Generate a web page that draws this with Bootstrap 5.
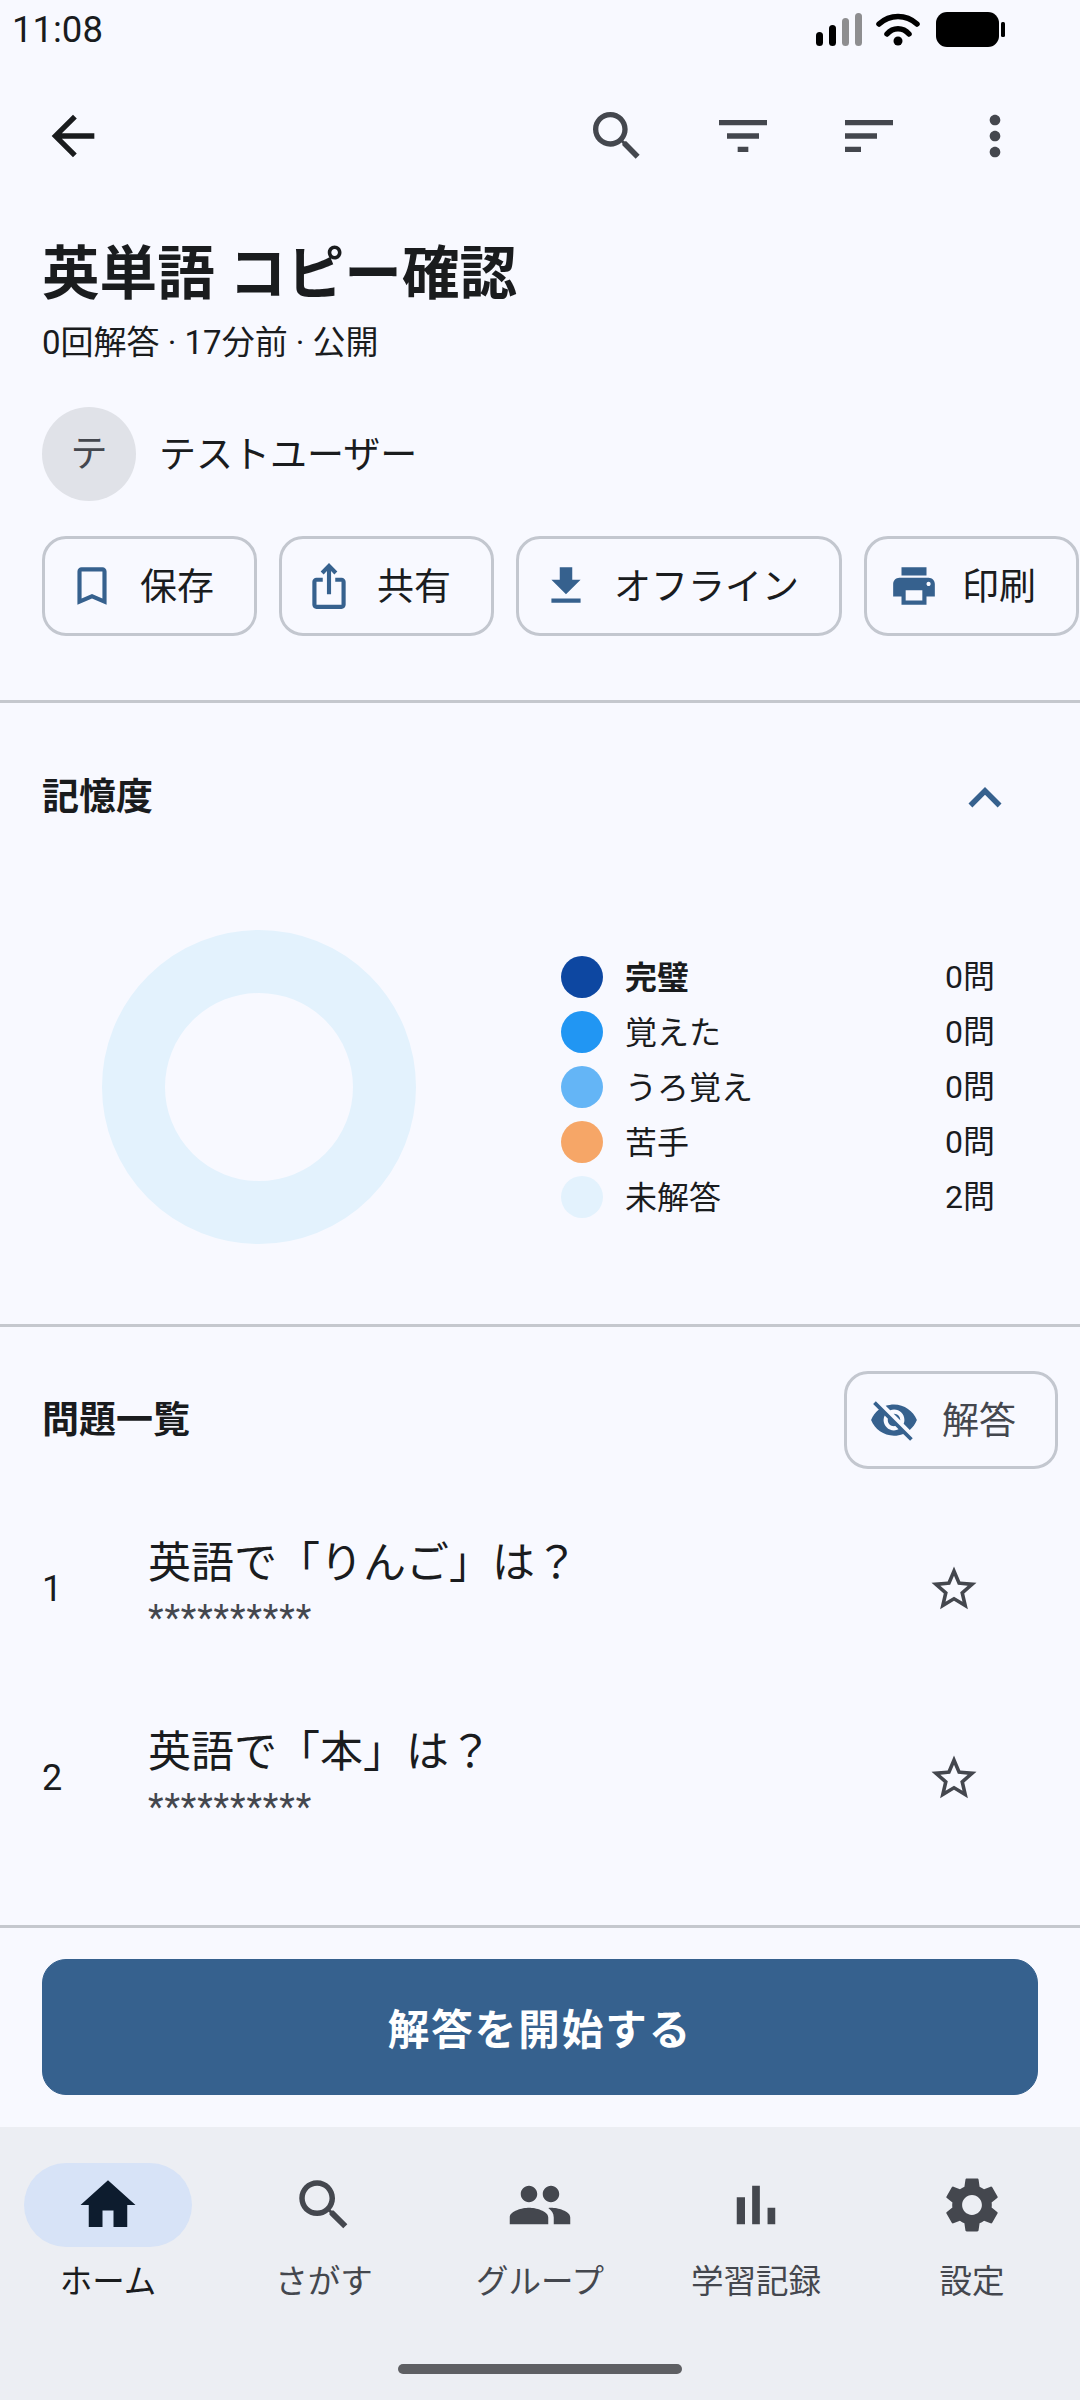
<!DOCTYPE html>
<html lang="ja">
<head>
<meta charset="UTF-8">
<title>英単語 コピー確認</title>
<link href="https://cdn.jsdelivr.net/npm/bootstrap@5.3.0/dist/css/bootstrap.min.css" rel="stylesheet">
<style>
html, body { width: 1080px; height: 2400px; overflow: hidden; }
body { background: #f8f9ff; color: #1a1c1e; font-family: Roboto, "Noto Sans CJK JP", sans-serif; }
svg { fill: currentColor; flex: none; display: block; }
.status-bar { height: 60px; padding: 0 72px 0 12px; }
.status-time { font-size: 36.5px; line-height: 60px; }
.app-bar { height: 152px; padding: 0 22px 0 41px; color: #44474e; }
.ico-btn { width: 126px; height: 64px; }
.back-btn { color: #1a1c1e; }
.head-block { padding: 25px 0 0 42px; }
.page-title { font-size: 57.6px; font-weight: 700; line-height: 76px; margin: 0; }
.page-sub { font-size: 33px; line-height: 44px; margin-top: 8px; }
.owner-row { margin-top: 40px; gap: 23px; font-size: 37px; line-height: 94px; }
.owner-name { padding-top: 4px; }
.owner-pic { width: 94px; height: 94px; border-radius: 50%; background: #e0e2e8; color: #44474e; font-size: 37px; padding-top: 3px; }
.chip-row { margin-top: 33px; gap: 22px; }
.chip-btn { height: 100px; border: 3px solid #c3c7cf; border-radius: 24px; padding: 0 40px 0 22px; gap: 23px; font-size: 37px; color: #1a1c1e; background: transparent; white-space: nowrap; }
.chip-btn svg { color: #36618e; }
.chip-label { padding-top: 4px; }
.rule { height: 3px; background: #c5c8ce; flex: none; }
.mem-section { height: 625px; margin-top: 64px; }
.mem-head { height: 190px; padding: 0 62px 0 42px; }
.sec-title { font-size: 37px; font-weight: 700; line-height: 50px; }
.mem-chart { padding-left: 102px; gap: 145px; margin-top: 37px; }
.donut { width: 314px; height: 314px; border-radius: 50%; border: 63px solid #e3f2fd; flex: none; }
.legend { width: 434px; }
.legend-row { height: 55px; font-size: 32px; }
.legend-dot { width: 42px; height: 42px; border-radius: 50%; margin-right: 22px; flex: none; }
.legend-name { padding-top: 2px; }
.legend-val { margin-left: auto; }
.list-section { height: 602px; }
.list-head { height: 143px; padding: 42px 22px 0 42px; margin-bottom: 24px; }
.list-head .sec-title { padding-top: 3px; }
.eye-btn { width: 214px; height: 98px; color: #44474e; }
.q-row { height: 189.5px; padding: 0 0 0 42px; }
.q-num { width: 106px; font-size: 36px; }
.q-body { padding-bottom: 8px; }
.q-text { font-size: 43px; line-height: 66px; }
.q-ans { font-size: 36px; line-height: 44px; letter-spacing: .9px; color: #44474e; }
.q-star { margin-right: 99px; color: #44474e; }
.start-wrap { padding: 31px 42px 32px; }
.start-btn { height: 136px; background: #36618e; border-color: #36618e; color: #fff; font-size: 41.5px; font-weight: 700; letter-spacing: 2px; border-radius: 24px; padding-top: 14px; }
.bottom-nav { background: #eceef3; height: 273px; padding-top: 36px; }
.nav-slot { width: 216px; color: #44474e; font-size: 32.5px; line-height: 44px; }
.nav-pill { width: 168px; height: 84px; border-radius: 42px; margin-bottom: 13px; }
.nav-slot.on { color: #1a1c1e; }
.nav-slot.on .nav-pill { background: #d7e3f7; color: #0d1c2e; }
.home-bar { width: 284px; height: 10px; border-radius: 5px; background: #5e5f63; position: absolute; left: 398px; bottom: 26px; }
</style>
</head>
<body class="d-flex flex-column position-relative">

<div class="status-bar d-flex align-items-center justify-content-between">
  <span class="status-time">11:08</span>
  <svg width="192" height="36" viewBox="0 0 192 36" fill="none">
    <rect x="0" y="20" width="7" height="14" rx="3.5" fill="#000"/>
    <rect x="13" y="13" width="7" height="21" rx="3.5" fill="#000"/>
    <rect x="26" y="6" width="7" height="28" rx="3.5" fill="#8e8e90"/>
    <rect x="39" y="1" width="7" height="33" rx="3.5" fill="#8e8e90"/>
    <path d="M63 12 C74 2 90 2 101 12" stroke="#000" stroke-width="5.5" stroke-linecap="round" fill="none"/>
    <path d="M71 22 C77 15 87 15 93 22" stroke="#000" stroke-width="5.5" stroke-linecap="round" fill="none"/>
    <circle cx="82" cy="29" r="4.5" fill="#000"/>
    <rect x="120" y="0" width="63" height="35" rx="11" fill="#000"/>
    <rect x="185" y="10" width="4" height="15" rx="1.5" fill="#000"/>
  </svg>
</div>

<div class="app-bar d-flex align-items-center">
  <svg class="back-btn" width="64" height="64" viewBox="0 0 24 24"><path d="M20 11H7.83l5.59-5.59L12 4l-8 8 8 8 1.41-1.41L7.83 13H20v-2z"/></svg>
  <div class="ms-auto d-flex">
    <div class="ico-btn d-flex justify-content-center"><svg width="64" height="64" viewBox="0 0 24 24"><path d="M15.5 14h-.79l-.28-.27C15.41 12.59 16 11.11 16 9.5 16 5.91 13.09 3 9.5 3S3 5.91 3 9.5 5.91 16 9.5 16c1.61 0 3.09-.59 4.23-1.57l.27.28v.79l5 4.99L20.49 19l-4.99-5zm-6 0C7.01 14 5 11.99 5 9.5S7.01 5 9.5 5 14 7.01 14 9.5 11.99 14 9.5 14z"/></svg></div>
    <div class="ico-btn d-flex justify-content-center"><svg width="64" height="64" viewBox="0 0 24 24"><path d="M10 18h4v-2h-4v2zM3 6v2h18V6H3zm3 7h12v-2H6v2z"/></svg></div>
    <div class="ico-btn d-flex justify-content-center"><svg width="64" height="64" viewBox="0 0 24 24"><path d="M3 18h6v-2H3v2zM3 6v2h18V6H3zm0 7h12v-2H3v2z"/></svg></div>
    <div class="ico-btn d-flex justify-content-center"><svg width="64" height="64" viewBox="0 0 24 24"><path d="M12 8c1.1 0 2-.9 2-2s-.9-2-2-2-2 .9-2 2 .9 2 2 2zm0 2c-1.1 0-2 .9-2 2s.9 2 2 2 2-.9 2-2-.9-2-2-2zm0 6c-1.1 0-2 .9-2 2s.9 2 2 2 2-.9 2-2-.9-2-2-2z"/></svg></div>
  </div>
</div>

<div class="head-block">
  <h1 class="page-title">英単語 コピー確認</h1>
  <div class="page-sub">0回解答 · 17分前 · 公開</div>
  <div class="owner-row d-flex align-items-center">
    <div class="owner-pic d-flex align-items-center justify-content-center">テ</div>
    <span class="owner-name">テストユーザー</span>
  </div>
  <div class="chip-row d-flex">
    <button class="btn chip-btn d-flex align-items-center"><svg width="50" height="50" viewBox="0 0 24 24"><path d="M17 3H7c-1.1 0-1.99.9-1.99 2L5 21l7-3 7 3V5c0-1.1-.9-2-2-2zm0 15l-5-2.18L7 18V5h10v13z"/></svg><span class="chip-label">保存</span></button>
    <button class="btn chip-btn d-flex align-items-center"><svg width="50" height="50" viewBox="0 0 24 24"><path d="M16 5l-1.42 1.42-1.59-1.59V16h-1.98V4.83L9.42 6.42 8 5l4-4 4 4zm4 5v11c0 1.1-.9 2-2 2H6c-1.11 0-2-.9-2-2V10c0-1.11.89-2 2-2h3v2H6v11h12V10h-3V8h3c1.1 0 2 .89 2 2z"/></svg><span class="chip-label">共有</span></button>
    <button class="btn chip-btn d-flex align-items-center"><svg width="50" height="50" viewBox="0 0 24 24"><path d="M19 9h-4V3H9v6H5l7 7 7-7zM5 18v2h14v-2H5z"/></svg><span class="chip-label">オフライン</span></button>
    <button class="btn chip-btn d-flex align-items-center"><svg width="50" height="50" viewBox="0 0 24 24"><path d="M19 8H5c-1.66 0-3 1.34-3 3v6h4v4h12v-4h4v-6c0-1.66-1.34-3-3-3zm-3 11H8v-5h8v5zm3-7c-.55 0-1-.45-1-1s.45-1 1-1 1 .45 1 1-.45 1-1 1zm-1-9H6v4h12V3z"/></svg><span class="chip-label">印刷</span></button>
  </div>
</div>

<div class="mem-section">
  <div class="rule"></div>
  <div class="mem-head d-flex align-items-center justify-content-between">
    <span class="sec-title">記憶度</span>
    <svg width="66" height="66" viewBox="0 0 24 24"><path fill="#36618e" d="M12 8l-6 6 1.41 1.41L12 10.83l4.59 4.58L18 14z"/></svg>
  </div>
  <div class="mem-chart d-flex align-items-center">
    <div class="donut"></div>
    <div class="legend">
      <div class="legend-row d-flex align-items-center"><span class="legend-dot" style="background:#0d47a1"></span><b class="legend-name">完璧</b><span class="legend-val">0問</span></div>
      <div class="legend-row d-flex align-items-center"><span class="legend-dot" style="background:#2196f3"></span><span class="legend-name">覚えた</span><span class="legend-val">0問</span></div>
      <div class="legend-row d-flex align-items-center"><span class="legend-dot" style="background:#64b5f6"></span><span class="legend-name">うろ覚え</span><span class="legend-val">0問</span></div>
      <div class="legend-row d-flex align-items-center"><span class="legend-dot" style="background:#f6a667"></span><span class="legend-name">苦手</span><span class="legend-val">0問</span></div>
      <div class="legend-row d-flex align-items-center"><span class="legend-dot" style="background:#e3f2fd"></span><span class="legend-name">未解答</span><span class="legend-val">2問</span></div>
    </div>
  </div>
</div>

<div class="list-section">
  <div class="rule"></div>
  <div class="list-head d-flex align-items-center justify-content-between">
    <span class="sec-title">問題一覧</span>
    <button class="btn chip-btn eye-btn d-flex align-items-center"><svg width="50" height="50" viewBox="0 0 24 24"><path d="M12 7c2.76 0 5 2.24 5 5 0 .65-.13 1.26-.36 1.83l2.92 2.92c1.51-1.26 2.7-2.89 3.43-4.75-1.73-4.39-6-7.5-11-7.5-1.4 0-2.74.25-3.98.7l2.16 2.16C10.74 7.13 11.35 7 12 7zM2 4.27l2.28 2.28.46.46C3.08 8.3 1.78 10.02 1 12c1.73 4.39 6 7.5 11 7.5 1.55 0 3.03-.3 4.38-.84l.42.42L19.73 22 21 20.73 3.27 3 2 4.27zM7.53 9.8l1.55 1.55c-.05.21-.08.43-.08.65 0 1.66 1.34 3 3 3 .22 0 .44-.03.65-.08l1.55 1.55c-.67.33-1.41.53-2.2.53-2.76 0-5-2.24-5-5 0-.79.2-1.53.53-2.2zm4.31-.78l3.15 3.15.02-.16c0-1.66-1.34-3-3-3l-.17.01z"/></svg><span class="chip-label">解答</span></button>
  </div>
  <div class="q-row d-flex align-items-center">
    <span class="q-num">1</span>
    <div class="q-body flex-grow-1">
      <div class="q-text">英語で「りんご」は？</div>
      <div class="q-ans">**********</div>
    </div>
    <svg class="q-star" width="54" height="54" viewBox="0 0 24 24"><path d="M22 9.24l-7.19-.62L12 2 9.19 8.63 2 9.24l5.46 4.73L5.82 21 12 17.27 18.18 21l-1.63-7.03L22 9.24zM12 15.4l-3.76 2.27 1-4.28-3.32-2.88 4.38-.38L12 6.1l1.71 4.04 4.38.38-3.32 2.88 1 4.28L12 15.4z"/></svg>
  </div>
  <div class="q-row d-flex align-items-center">
    <span class="q-num">2</span>
    <div class="q-body flex-grow-1">
      <div class="q-text">英語で「本」は？</div>
      <div class="q-ans">**********</div>
    </div>
    <svg class="q-star" width="54" height="54" viewBox="0 0 24 24"><path d="M22 9.24l-7.19-.62L12 2 9.19 8.63 2 9.24l5.46 4.73L5.82 21 12 17.27 18.18 21l-1.63-7.03L22 9.24zM12 15.4l-3.76 2.27 1-4.28-3.32-2.88 4.38-.38L12 6.1l1.71 4.04 4.38.38-3.32 2.88 1 4.28L12 15.4z"/></svg>
  </div>
</div>

<div class="rule"></div>
<div class="start-wrap">
  <button class="btn start-btn w-100">解答を開始する</button>
</div>

<div class="bottom-nav d-flex mt-auto px-0">
  <div class="nav-slot on d-flex flex-column align-items-center">
    <div class="nav-pill d-flex align-items-center justify-content-center"><svg width="66" height="66" viewBox="0 0 24 24"><path d="M10 20v-6h4v6h5v-8h3L12 3 2 12h3v8z"/></svg></div>ホーム
  </div>
  <div class="nav-slot d-flex flex-column align-items-center">
    <div class="nav-pill d-flex align-items-center justify-content-center"><svg width="66" height="66" viewBox="0 0 24 24"><path d="M15.5 14h-.79l-.28-.27C15.41 12.59 16 11.11 16 9.5 16 5.91 13.09 3 9.5 3S3 5.91 3 9.5 5.91 16 9.5 16c1.61 0 3.09-.59 4.23-1.57l.27.28v.79l5 4.99L20.49 19l-4.99-5zm-6 0C7.01 14 5 11.99 5 9.5S7.01 5 9.5 5 14 7.01 14 9.5 11.99 14 9.5 14z"/></svg></div>さがす
  </div>
  <div class="nav-slot d-flex flex-column align-items-center">
    <div class="nav-pill d-flex align-items-center justify-content-center"><svg width="66" height="66" viewBox="0 0 24 24"><path d="M16 11c1.66 0 2.99-1.34 2.99-3S17.66 5 16 5c-1.66 0-3 1.34-3 3s1.34 3 3 3zm-8 0c1.66 0 2.99-1.34 2.99-3S9.66 5 8 5C6.34 5 5 6.34 5 8s1.34 3 3 3zm0 2c-2.33 0-7 1.17-7 3.5V19h14v-2.5c0-2.33-4.67-3.5-7-3.5zm8 0c-.29 0-.62.02-.97.05 1.16.84 1.97 1.97 1.97 3.45V19h6v-2.5c0-2.33-4.67-3.5-7-3.5z"/></svg></div>グループ
  </div>
  <div class="nav-slot d-flex flex-column align-items-center">
    <div class="nav-pill d-flex align-items-center justify-content-center"><svg width="66" height="66" viewBox="0 0 24 24"><path d="M5 9.2h3V19H5zM10.6 5h2.8v14h-2.8zm5.6 8H19v6h-2.8z"/></svg></div>学習記録
  </div>
  <div class="nav-slot d-flex flex-column align-items-center">
    <div class="nav-pill d-flex align-items-center justify-content-center"><svg width="66" height="66" viewBox="0 0 24 24"><path d="M19.14 12.94c.04-.3.06-.61.06-.94 0-.32-.02-.64-.07-.94l2.03-1.58c.18-.14.23-.41.12-.61l-1.92-3.32c-.12-.22-.37-.29-.59-.22l-2.39.96c-.5-.38-1.03-.7-1.62-.94l-.36-2.54c-.04-.24-.24-.41-.48-.41h-3.84c-.24 0-.43.17-.47.41l-.36 2.54c-.59.24-1.13.57-1.62.94l-2.39-.96c-.22-.08-.47 0-.59.22L2.74 8.87c-.12.21-.08.47.12.61l2.03 1.58c-.05.3-.09.63-.09.94s.02.64.07.94l-2.03 1.58c-.18.14-.23.41-.12.61l1.92 3.32c.12.22.37.29.59.22l2.39-.96c.5.38 1.03.7 1.62.94l.36 2.54c.05.24.24.41.48.41h3.84c.24 0 .44-.17.47-.41l.36-2.54c.59-.24 1.13-.56 1.62-.94l2.39.96c.22.08.47 0 .59-.22l1.92-3.32c.12-.22.07-.47-.12-.61l-2.01-1.58zM12 15.6c-1.98 0-3.6-1.62-3.6-3.6s1.62-3.6 3.6-3.6 3.6 1.62 3.6 3.6-1.62 3.6-3.6 3.6z"/></svg></div>設定
  </div>
</div>
<div class="home-bar"></div>

</body>
</html>
